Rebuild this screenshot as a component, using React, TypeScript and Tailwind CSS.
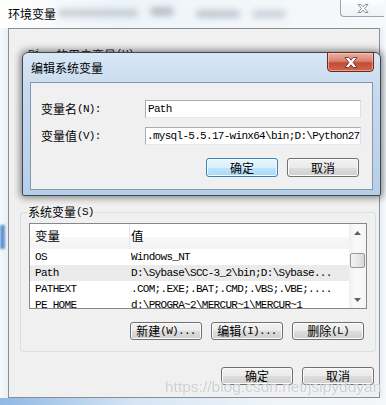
import React from "react";

const CJK = "font-['Noto_Sans_CJK_SC',sans-serif]";
const MONO = "font-['Liberation_Mono',monospace] text-[11px] tracking-[-0.7px]";

function Mix({ c, a }: { c: string; a?: string }) {
  return (
    <span className="inline-flex items-center leading-none whitespace-nowrap">
      <span className={`${CJK} text-[12px] leading-none`}>{c}</span>
      {a ? <span className={`${MONO} leading-none`}>{a}</span> : null}
    </span>
  );
}

function Btn({ children, def, h = "h-[18px]" }: { children: React.ReactNode; def?: boolean; h?: string }) {
  return (
    <div
      className={`w-[72px] ${h} rounded-[3px] border flex items-center justify-center ${
        def
          ? "border-[#3c7fb1] bg-[linear-gradient(#eaf6fd_0%,#d9f0fc_50%,#bee6fd_50%,#a7d9f5_100%)] shadow-[inset_0_0_0_1px_#f4fbff]"
          : "border-[#707070] bg-[linear-gradient(#f2f2f2_0%,#ebebeb_50%,#dddddd_50%,#cfcfcf_100%)] shadow-[inset_0_0_0_1px_#fbfbfb]"
      }`}
    >
      {children}
    </div>
  );
}

const rows = [
  { n: "OS", v: "Windows_NT", sel: false },
  { n: "Path", v: "D:\\Sybase\\SCC-3_2\\bin;D:\\Sybase...", sel: true },
  { n: "PATHEXT", v: ".COM;.EXE;.BAT;.CMD;.VBS;.VBE;....", sel: false },
  { n: "PE_HOME", v: "d:\\PROGRA~2\\MERCUR~1\\MERCUR~1", sel: false },
];

export default function App() {
  return (
    <div className={`relative w-[386px] h-[405px] overflow-hidden bg-[#f1f5f8] text-black ${CJK} text-[12px]`}>
      {/* outer title bar */}
      <div className="relative h-[28px] flex items-center pl-[8px] bg-[linear-gradient(90deg,#ffffff,#eef4f9_30%,#f3f7fa_70%,#f6f9fb)]">
        <div className="absolute left-[58px] top-[9px] w-[80px] h-[8px] rounded-full bg-[#9aa6b2] opacity-50 blur-[3px]" />
        <div className="absolute left-[150px] top-[7px] w-[24px] h-[9px] rounded-full bg-[#7f8b97] opacity-50 blur-[3px]" />
        <div className="absolute left-[196px] top-[10px] w-[44px] h-[8px] rounded-full bg-[#8e9aa6] opacity-50 blur-[3px]" />
        <div className="absolute left-[252px] top-[10px] w-[34px] h-[8px] rounded-full bg-[#9aa6b2] opacity-45 blur-[3px]" />
        <span className="relative text-[12px] leading-none">环境变量</span>
        <div className="absolute right-[2px] top-0 w-[44px] h-[17px] border-l border-b border-[#9aa5b1] rounded-bl-[4px] bg-[linear-gradient(#fbfdfe,#eef3f7)] flex items-center justify-center">
          <svg width="12" height="9" viewBox="0 0 12 9">
            <path
              d="M1 0.5 H4 L6 2.8 L8 0.5 H11 L7.6 4.5 L11 8.5 H8 L6 6.2 L4 8.5 H1 L4.4 4.5 Z"
              fill="#ffffff"
              stroke="#7b8591"
              strokeWidth="0.9"
            />
          </svg>
        </div>
      </div>

      {/* outer body */}
      <div className="flex h-[370px]">
        <div className="relative w-[8px] bg-[linear-gradient(90deg,#f7f9fb,#e9eff4)]">
          <div className="absolute left-0 top-[197px] w-[5px] h-[24px] bg-[#3f7cc4] blur-[1px] opacity-80" />
        </div>
        <div className="w-[372px] border border-[#8a8f96] bg-[#f0f0f0] flex flex-col">
          <div className="h-[176px] pl-[19px] pt-[14px] text-[#222]">
            <span className="inline-flex items-center leading-none">
              <span className={`${MONO} w-[28px]`}>Ri</span>
              <Mix c="的用户变量" a="(U)" />
            </span>
          </div>
          <fieldset className="ml-[11px] w-[356px] border border-[#d5dfe5] rounded-[3px] px-[8px] pb-[11px]">
            <legend className="ml-[-2px] px-[1px] leading-[14px] h-[14px] flex items-center">
              <Mix c="系统变量" a="(S)" />
            </legend>
            <div className="mt-[4px] w-[338px] h-[86px] border border-[#828790] bg-white flex overflow-hidden">
              <div className="flex-1 flex flex-col">
                <div className="h-[25px] flex shrink-0 bg-[linear-gradient(#ffffff,#ffffff_50%,#f7f8f9_50%,#f3f4f6)]">
                  <div className="w-[100px] border-r border-[#e5e5e5] pl-[5px] flex items-center">
                    <span className="text-[12.5px] leading-none">变量</span>
                  </div>
                  <div className="flex-1 pl-[1px] flex items-center">
                    <span className="text-[12.5px] leading-none">值</span>
                  </div>
                </div>
                {rows.map((r) => (
                  <div key={r.n} className={`h-[16px] shrink-0 flex items-center ${r.sel ? "bg-[#ebebeb]" : ""}`}>
                    <div className={`w-[100px] pl-[5px] ${MONO} leading-none`}>{r.n}</div>
                    <div className={`flex-1 pl-[1px] ${MONO} leading-none whitespace-nowrap`}>{r.v}</div>
                  </div>
                ))}
              </div>
              <div className="w-[17px] flex flex-col bg-[linear-gradient(90deg,#f0f0f0,#fafafa_40%,#f4f4f4)]">
                <div className="h-[17px] flex items-center justify-center">
                  <svg width="7" height="4" viewBox="0 0 7 4">
                    <path d="M0 4 L3.5 0 L7 4 Z" fill="#606060" />
                  </svg>
                </div>
                <div className="h-[12px]" />
                <div className="mx-[1px] h-[15px] rounded-[2px] border border-[#979797] bg-[linear-gradient(90deg,#f3f3f3,#e8e8e8_50%,#d8d8d8)]" />
                <div className="flex-1" />
                <div className="h-[17px] flex items-center justify-center">
                  <svg width="7" height="4" viewBox="0 0 7 4">
                    <path d="M0 0 L7 0 L3.5 4 Z" fill="#606060" />
                  </svg>
                </div>
              </div>
            </div>
            <div className="mt-[13px] flex justify-end gap-[9px] pr-[3px]">
              <Btn>
                <Mix c="新建" a="(W)..." />
              </Btn>
              <Btn>
                <Mix c="编辑" a="(I)..." />
              </Btn>
              <Btn>
                <Mix c="删除" a="(L)" />
              </Btn>
            </div>
          </fieldset>
          <div className="mt-[15px] flex justify-end gap-[9px] pr-[5px]">
            <Btn>
              <Mix c="确定" />
            </Btn>
            <Btn>
              <Mix c="取消" />
            </Btn>
          </div>
        </div>
        <div className="flex-1 bg-[linear-gradient(90deg,#e9eff4,#f6f9fb)]" />
      </div>
      <div className="h-[7px] bg-[linear-gradient(90deg,#8fb8e4,#d6e5f4_35%,#eef4f9_70%,#f4f7fa)]" />

      {/* edit dialog */}
      <div className="absolute left-[22px] top-[52px] w-[359px] h-[144px] rounded-t-[6px] rounded-b-[2px] border border-[#3a4858] bg-[linear-gradient(#d9e7f5,#c7dbef_25%,#bfd5ec_60%,#b6cfe9)] shadow-[0_0_7px_2px_rgba(0,0,0,0.45)] flex flex-col">
        <div className="h-[29px] flex items-start pl-[8px]">
          <span className="mt-[9px] text-[12px] leading-none">编辑系统变量</span>
          <div className="ml-auto mr-[6px] mt-[-1px] w-[47px] h-[20px] rounded-b-[4px] border border-[#6b2a20] bg-[linear-gradient(#eab0a2,#d98372_45%,#c64b35_55%,#d0654c)] shadow-[inset_0_0_0_1px_rgba(255,220,210,0.5)] flex items-center justify-center">
            <svg width="14" height="11" viewBox="0 0 14 11">
              <path
                d="M1 0.5 H4.8 L7 3.2 L9.2 0.5 H13 L9.1 5.5 L13 10.5 H9.2 L7 7.8 L4.8 10.5 H1 L4.9 5.5 Z"
                fill="#ffffff"
                stroke="#5a2218"
                strokeWidth="0.8"
              />
            </svg>
          </div>
        </div>
        <div className="mx-[7px] h-[108px] border border-[#8597ab] bg-[#f0f0f0] flex flex-col pt-[17px] pl-[10px] pr-[11px]">
          <div className="flex items-center h-[18px]">
            <div className="w-[104px]">
              <Mix c="变量名" a="(N):" />
            </div>
            <div className="flex-1 h-[18px] border border-[#abadb3] border-b-[#e3e9ef] border-r-[#dbdfe6] bg-white flex items-center pl-[2px] overflow-hidden">
              <span className={`${MONO} leading-none`}>Path</span>
            </div>
          </div>
          <div className="mt-[9px] flex items-center h-[18px]">
            <div className="w-[104px]">
              <Mix c="变量值" a="(V):" />
            </div>
            <div className="flex-1 h-[18px] border border-[#abadb3] border-b-[#e3e9ef] border-r-[#dbdfe6] bg-white flex items-center pl-[1px] overflow-hidden">
              <span className={`${MONO} leading-none whitespace-nowrap`}>.mysql-5.5.17-winx64\bin;D:\Python27</span>
            </div>
          </div>
          <div className="mt-[13px] flex justify-end gap-[9px] pr-[2px]">
            <Btn def h="h-[19px]">
              <Mix c="确定" />
            </Btn>
            <Btn h="h-[19px]">
              <Mix c="取消" />
            </Btn>
          </div>
        </div>
      </div>

      {/* watermark */}
      <div className="absolute left-[165px] top-[379px] font-['Liberation_Sans',sans-serif] text-[15.5px] leading-none text-[#c9cdd1] opacity-90 [text-shadow:0_0_1px_#ffffff] whitespace-nowrap">
        https://blog.csdn.net/jsipyduyan
      </div>
    </div>
  );
}
